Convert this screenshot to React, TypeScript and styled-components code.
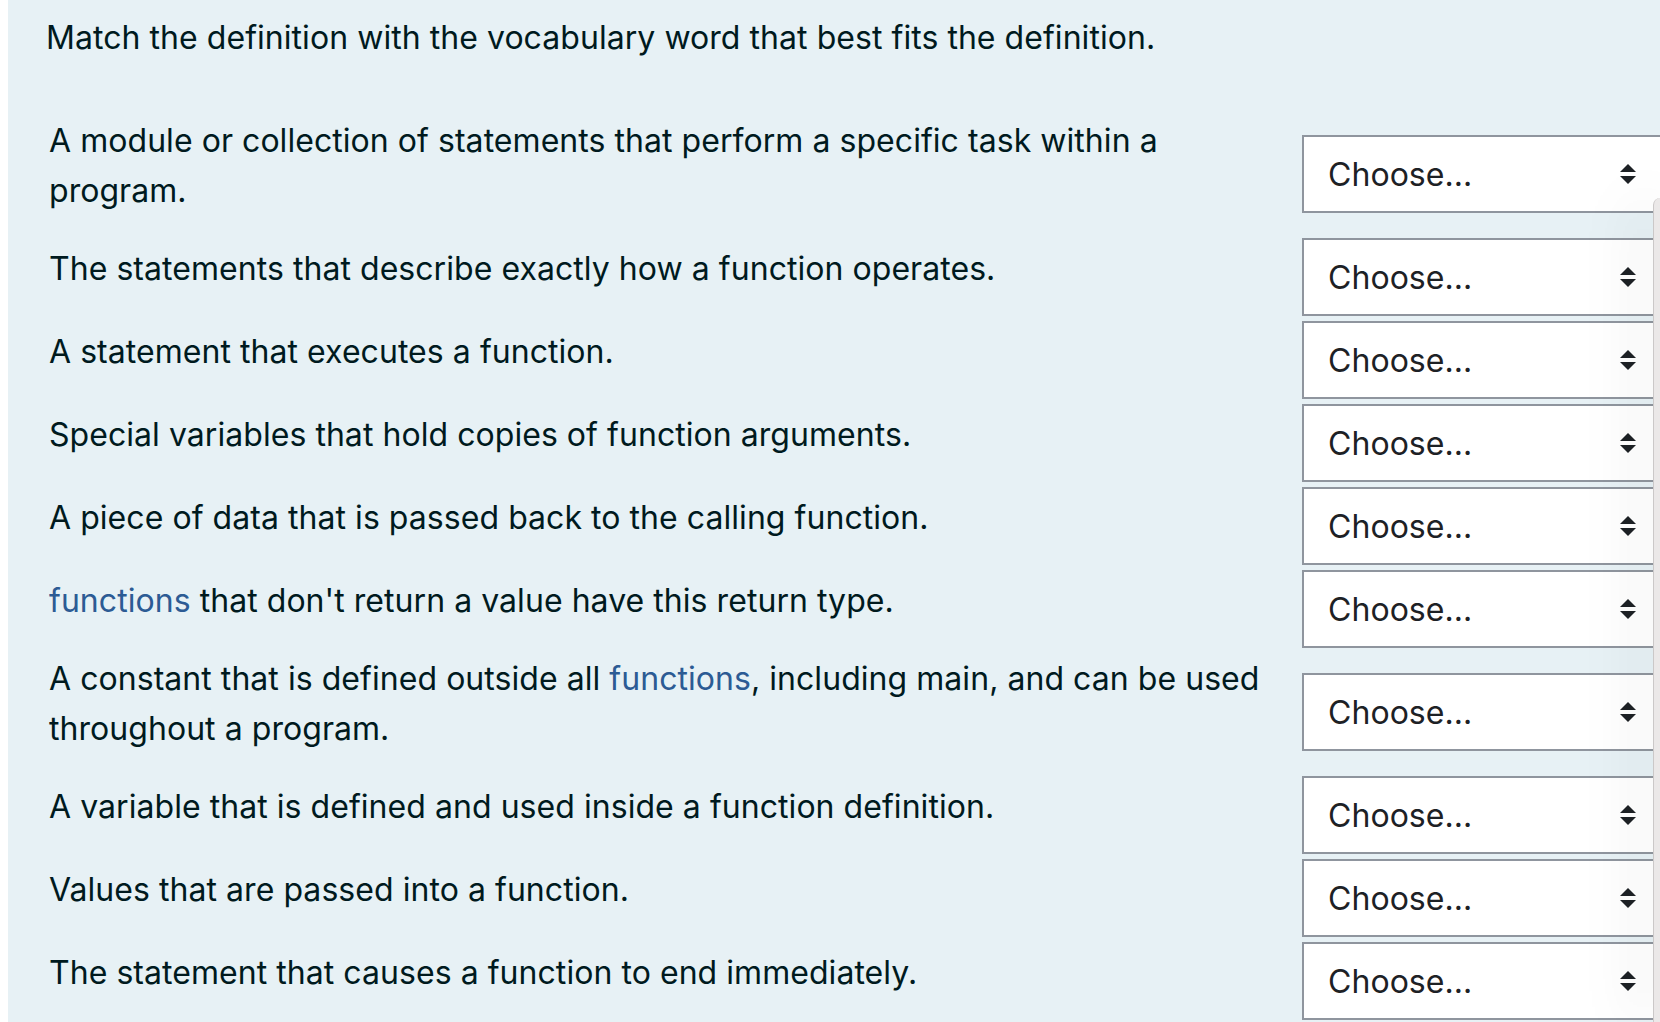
import React from "react";
import styled, { createGlobalStyle } from "styled-components";

const GlobalStyle = createGlobalStyle`
  html, body {
    margin: 0;
    padding: 0;
    background: #ffffff;
    overflow: hidden;
  }
  body {
    font-family: Inter, "Noto Sans", "Liberation Sans", sans-serif;
  }
`;

const Panel = styled.div`
  margin-left: 8px;
  min-height: 100vh;
  background: #e7f1f5;
  color: #001a1e;
  padding: 13px 0 0 38px;
  box-sizing: border-box;
  font-size: 32px;
  line-height: 50px;
  letter-spacing: 0.05px;
`;

const Title = styled.p`
  margin: 0 0 52px 0;
`;

const Rows = styled.div`
  display: flex;
  flex-direction: column;
  gap: 5px;
`;

const Row = styled.div`
  display: grid;
  grid-template-columns: 1256px 360px;
  align-items: center;
`;

const Definition = styled.div`
  padding: 1px 20px 17px 3px;
`;

const Link = styled.a`
  color: #2c5b94;
  text-decoration: none;
`;

const SelectWrap = styled.div`
  position: relative;
  width: 360px;
  height: 78px;
`;

const Select = styled.select`
  appearance: none;
  -webkit-appearance: none;
  width: 100%;
  height: 100%;
  box-sizing: border-box;
  border: 2px solid #8f959e;
  border-radius: 0;
  background: #ffffff;
  color: #1d2125;
  font-family: Inter, "Noto Sans", "Liberation Sans", sans-serif;
  font-size: 32px;
  letter-spacing: 0.05px;
  padding: 0 56px 0 24px;
  outline: none;
`;

const Arrow = styled.svg`
  position: absolute;
  right: 26px;
  top: 50%;
  margin-top: -10px;
  pointer-events: none;
`;

const Overlay = styled.div`
  position: fixed;
  left: 1653px;
  top: 198px;
  right: 0;
  bottom: 0;
  background: #ebe8e8;
  border-left: 1px solid #cbc8c8;
  border-top-left-radius: 13px;
  box-shadow: -12px 0 56px rgba(0, 0, 0, 0.22);
`;

type Part = string | { link: string };

const items: Part[][] = [
  ["A module or collection of statements that perform a specific task within a program."],
  ["The statements that describe exactly how a function operates."],
  ["A statement that executes a function."],
  ["Special variables that hold copies of function arguments."],
  ["A piece of data that is passed back to the calling function."],
  [{ link: "functions" }, " that don't return a value have this return type."],
  [
    "A constant that is defined outside all ",
    { link: "functions" },
    ", including main, and can be used throughout a program.",
  ],
  ["A variable that is defined and used inside a function definition."],
  ["Values that are passed into a function."],
  ["The statement that causes a function to end immediately."],
];

const UpDown = () => (
  <Arrow width="16" height="20" viewBox="0 0 4 5">
    <path d="M2 0L0 2h4zm0 5L0 3h4z" fill="#1d2125" />
  </Arrow>
);

export default function App() {
  return (
    <>
      <GlobalStyle />
      <Panel>
        <Title>Match the definition with the vocabulary word that best fits the definition.</Title>
        <Rows>
          {items.map((parts, i) => (
            <Row key={i}>
              <Definition>
                {parts.map((p, j) =>
                  typeof p === "string" ? (
                    <React.Fragment key={j}>{p}</React.Fragment>
                  ) : (
                    <Link key={j} href="#">
                      {p.link}
                    </Link>
                  )
                )}
              </Definition>
              <SelectWrap>
                <Select defaultValue="">
                  <option value="">Choose...</option>
                </Select>
                <UpDown />
              </SelectWrap>
            </Row>
          ))}
        </Rows>
      </Panel>
      <Overlay />
    </>
  );
}
